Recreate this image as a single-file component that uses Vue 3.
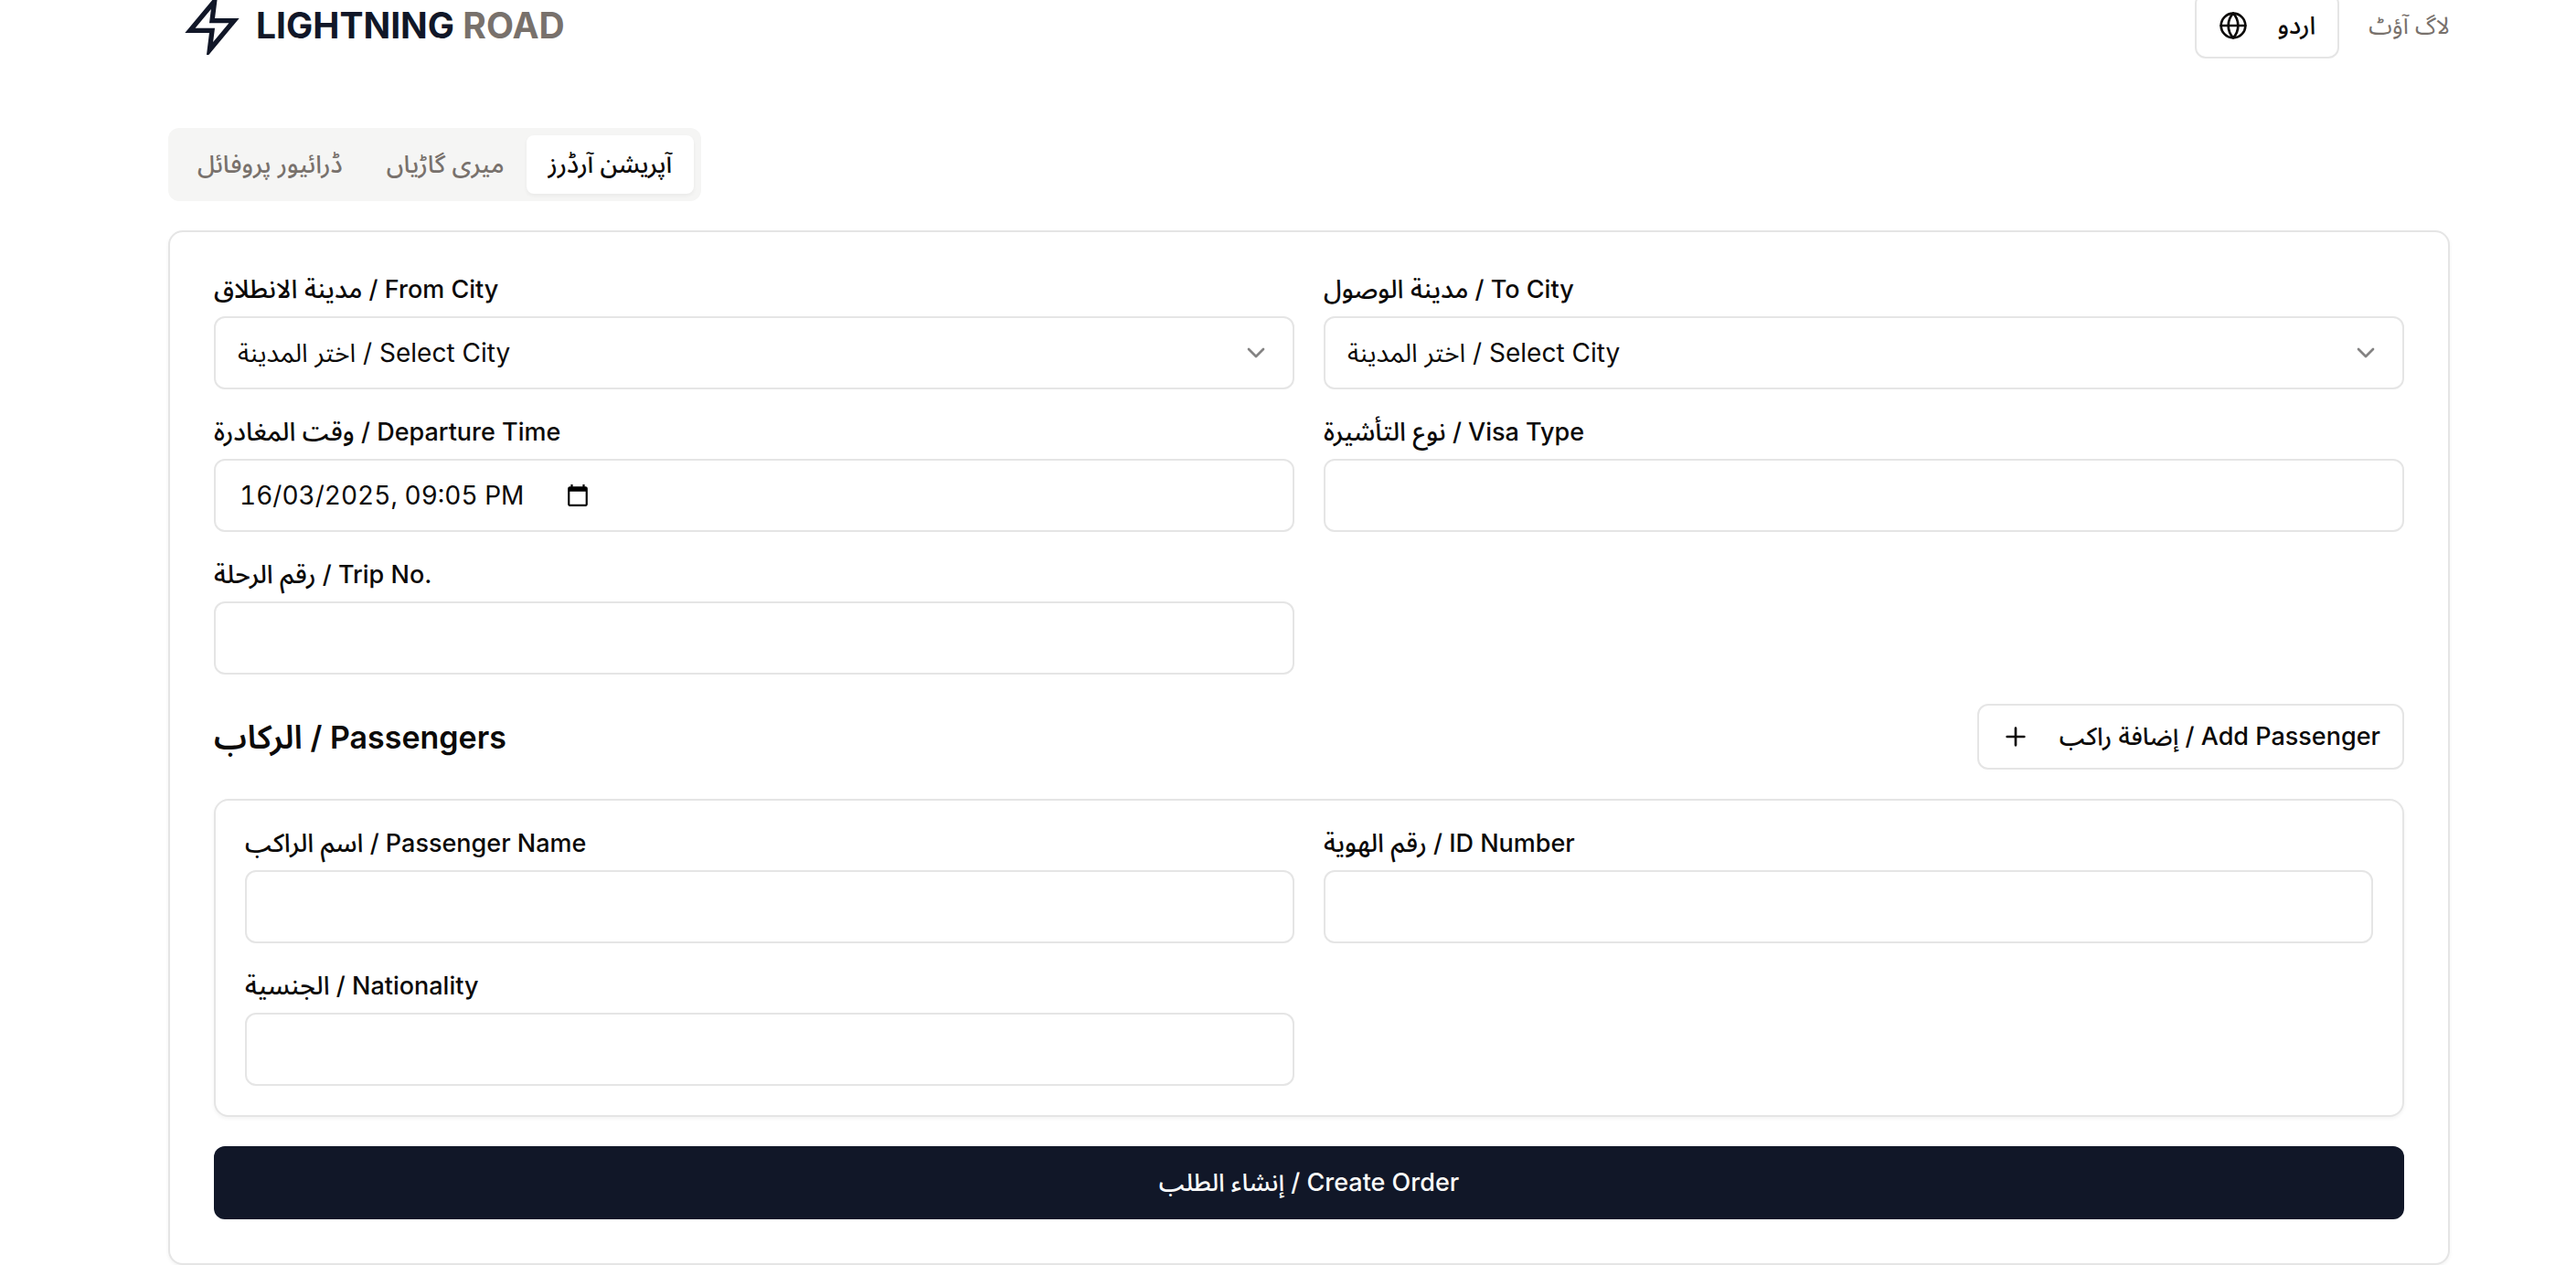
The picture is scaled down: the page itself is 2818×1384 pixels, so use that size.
<script setup>
import { reactive, ref } from 'vue'

const tabs = [
  { id: 'profile', label: 'ڈرائیور پروفائل' },
  { id: 'vehicles', label: 'میری گاڑیاں' },
  { id: 'orders', label: 'آپریشن آرڈرز' },
]
const activeTab = ref('orders')

const order = reactive({
  from: '',
  to: '',
  departure: '16/03/2025, 09:05 PM',
  visa: '',
  trip: '',
})

let nextId = 1
const newPassenger = () => ({ key: nextId++, name: '', idNumber: '', nationality: '' })
const passengers = ref([newPassenger()])

const passengerFields = [
  { id: 'name', ar: 'اسم الراكب', en: 'Passenger Name' },
  { id: 'idNumber', ar: 'رقم الهوية', en: 'ID Number' },
  { id: 'nationality', ar: 'الجنسية', en: 'Nationality' },
]
const cityFields = [
  { id: 'from', ar: 'مدينة الانطلاق', en: 'From City' },
  { id: 'to', ar: 'مدينة الوصول', en: 'To City' },
]
</script>

<template>
  <div class="page">
    <header class="header">
      <a class="brand" href="#">
        <svg class="bolt" viewBox="0 0 24 24" aria-hidden="true">
          <path d="M13 2L3 14h9l-1 8 10-12h-9l1-8z" />
        </svg>
        <span class="brand-name">LIGHTNING <span class="brand-muted">ROAD</span></span>
      </a>
      <div class="header-actions">
        <button type="button" class="outline-button">
          <svg class="icon" viewBox="0 0 24 24" aria-hidden="true">
            <circle cx="12" cy="12" r="10" />
            <path d="M12 2a14.5 14.5 0 0 0 0 20 14.5 14.5 0 0 0 0-20" />
            <path d="M2 12h20" />
          </svg>
          <span lang="ur">اردو</span>
        </button>
        <a class="logout" href="#" lang="ur">لاگ آؤٹ</a>
      </div>
    </header>

    <main>
      <div class="tabs" role="tablist">
        <button
          v-for="tab in tabs"
          :key="tab.id"
          type="button"
          role="tab"
          lang="ur"
          class="tab"
          :class="{ active: tab.id === activeTab }"
          :aria-selected="tab.id === activeTab"
          @click="activeTab = tab.id"
        >{{ tab.label }}</button>
      </div>

      <form class="card order" @submit.prevent>
        <div class="grid">
          <div v-for="field in cityFields" :key="field.id" class="field">
            <label :for="field.id"><span lang="ar">{{ field.ar }}</span> / {{ field.en }}</label>
            <div class="select-wrap">
              <select :id="field.id" v-model="order[field.id]" class="control">
                <option value="">اختر المدينة / Select City</option>
              </select>
              <svg class="icon chevron" viewBox="0 0 24 24" aria-hidden="true"><path d="m6 9 6 6 6-6" /></svg>
            </div>
          </div>
          <div class="field">
            <label for="departure"><span lang="ar">وقت المغادرة</span> / Departure Time</label>
            <div class="control date-control">
              <input id="departure" v-model="order.departure" type="text" class="date-input" />
              <button type="button" class="picker" aria-label="Open calendar">
                <svg viewBox="0 0 24 24" aria-hidden="true">
                  <path d="M20 3h-1V1h-2v2H7V1H5v2H4c-1.100 0-2 .9-2 2v16c0 1.100.9 2 2 2h16c1.100 0 2-.9 2-2V5c0-1.100-.9-2-2-2zm0 18H4V8h16v13z" />
                </svg>
              </button>
            </div>
          </div>
          <div class="field">
            <label for="visa"><span lang="ar">نوع التأشيرة</span> / Visa Type</label>
            <input id="visa" v-model="order.visa" type="text" class="control" />
          </div>
          <div class="field">
            <label for="trip"><span lang="ar">رقم الرحلة</span> / Trip No.</label>
            <input id="trip" v-model="order.trip" type="text" class="control" />
          </div>
        </div>

        <div class="section-head">
          <h3><span lang="ar">الركاب</span> / Passengers</h3>
          <button type="button" class="outline-button" @click="passengers.push(newPassenger())">
            <svg class="icon" viewBox="0 0 24 24" aria-hidden="true"><path d="M5 12h14M12 5v14" /></svg>
            <span><span lang="ar">إضافة راكب</span> / Add Passenger</span>
          </button>
        </div>

        <div v-for="p in passengers" :key="p.key" class="card passenger grid">
          <div v-for="field in passengerFields" :key="field.id" class="field">
            <label :for="`${field.id}-${p.key}`"><span lang="ar">{{ field.ar }}</span> / {{ field.en }}</label>
            <input :id="`${field.id}-${p.key}`" v-model="p[field.id]" type="text" class="control" />
          </div>
        </div>

        <button type="submit" class="submit"><span lang="ar">إنشاء الطلب</span> / Create Order</button>
      </form>
    </main>
  </div>
</template>

<style>
body {
  background: #fff;
}
</style>

<style scoped>
.page {
  --border: #e5e5e5;
  --ink: #0c0a09;
  --muted: #78716c;
  --navy: #111728;
  padding: 0 138px 0 184px;
  font-family: Inter, "Noto Sans Arabic", "DejaVu Sans", sans-serif;
  font-size: 28px;
  line-height: 40px;
  color: var(--ink);
}

.page *,
.page {
  box-sizing: border-box;
}

button,
input,
select {
  margin: 0;
  font: inherit;
  color: inherit;
}

a {
  color: inherit;
  text-decoration: none;
}

.icon {
  flex: none;
  width: 32px;
  height: 32px;
  fill: none;
  stroke: currentColor;
  stroke-width: 2;
  stroke-linecap: round;
  stroke-linejoin: round;
}

/* The header is scrolled a little past the top of the window. */
.header {
  display: flex;
  align-items: center;
  justify-content: space-between;
  height: 72px;
  margin-top: -8px;
  padding-left: 16px;
}

.brand {
  display: flex;
  align-items: center;
  gap: 16px;
  color: var(--navy);
}

.bolt {
  width: 64px;
  height: 64px;
  fill: none;
  stroke: currentColor;
  stroke-width: 2;
}

.brand-name {
  font-size: 39px;
  font-weight: 700;
  line-height: 56px;
}

.brand-muted,
.logout {
  color: var(--muted);
}

.logout {
  font-size: 26px;
}

.header-actions {
  display: flex;
  align-items: center;
  gap: 32px;
}

.outline-button,
.tab,
.submit,
label {
  font-size: 27px;
  font-weight: 500;
}

.outline-button {
  display: flex;
  align-items: center;
  gap: 32px;
  height: 72px;
  padding: 0 24px;
  border: 2px solid var(--border);
  border-radius: 12px;
  background: #fff;
}

.tabs {
  display: flex;
  width: fit-content;
  height: 80px;
  margin-top: 76px;
  padding: 8px;
  border-radius: 12px;
  background: #f5f5f4;
}

.tab {
  padding: 0 24px;
  border: 0;
  border-radius: 8px;
  background: none;
  color: var(--muted);
}

.tab.active {
  background: #fff;
  color: var(--ink);
  box-shadow: 0 2px 4px rgb(0 0 0 / 5%);
}

.card {
  border: 2px solid var(--border);
  border-radius: 16px;
  background: #fff;
  box-shadow: 0 2px 4px rgb(0 0 0 / 5%);
}

.order {
  display: flex;
  flex-direction: column;
  gap: 32px;
  margin-top: 32px;
  padding: 48px;
}

.grid {
  display: grid;
  grid-template-columns: 1fr 1fr;
  gap: 32px;
}

.passenger {
  padding: 32px;
}

.field {
  display: flex;
  flex-direction: column;
  gap: 16px;
  min-width: 0;
}

label {
  height: 28px;
  line-height: 28px;
  white-space: nowrap;
}

label [lang="ar"] {
  font-size: 28px;
}

.control {
  width: 100%;
  height: 80px;
  padding: 0 24px;
  border: 2px solid var(--border);
  border-radius: 12px;
  background: #fff;
  outline-color: var(--navy);
}

.select-wrap {
  display: grid;
  align-items: center;
}

.select-wrap > * {
  grid-area: 1 / 1;
}

select.control {
  appearance: none;
}

.chevron {
  justify-self: end;
  margin-right: 26px;
  opacity: 0.5;
  pointer-events: none;
}

.date-control {
  display: flex;
  align-items: center;
  gap: 44px;
}

.date-input {
  field-sizing: content;
  padding: 0 2px;
  border: 0;
  background: none;
  outline: none;
  font-variant-numeric: tabular-nums;
}

.picker {
  display: flex;
  padding: 0;
  border: 0;
  background: none;
}

.picker svg {
  width: 26px;
  height: 26px;
  fill: #000;
}

.section-head {
  display: flex;
  align-items: center;
  justify-content: space-between;
}

h3 {
  margin: 0;
  font-size: 34px;
  font-weight: 600;
  line-height: 56px;
}

h3 [lang="ar"] {
  font-size: 36px;
}

.submit {
  height: 80px;
  border: 0;
  border-radius: 12px;
  background: var(--navy);
  color: #fafaf9;
}
</style>
